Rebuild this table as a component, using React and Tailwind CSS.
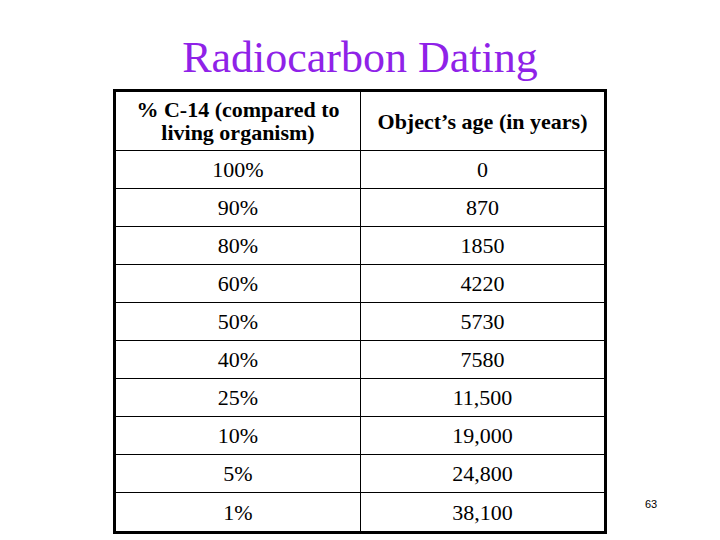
const rows = [
  ["100%", "0"],
  ["90%", "870"],
  ["80%", "1850"],
  ["60%", "4220"],
  ["50%", "5730"],
  ["40%", "7580"],
  ["25%", "11,500"],
  ["10%", "19,000"],
  ["5%", "24,800"],
  ["1%", "38,100"],
];

export default function App() {
  return (
    <div className="w-[720px] h-[540px] bg-white overflow-hidden pt-[36px] font-[family-name:'Liberation_Serif','Times_New_Roman',serif] text-black">
      <h1 className="text-center text-[44px] leading-[44px] text-[#8f22e8] mb-[9px]">
        Radiocarbon Dating
      </h1>
      <div className="flex">
        <div className="ml-[113px] w-[494px] border-[3px] border-black">
          <div className="flex h-[59px] border-b border-black font-bold text-[22px] leading-[23px]">
            <div className="w-[245px] border-r border-black flex items-center justify-center text-center">
              % C-14 (compared to
              <br />
              living organism)
            </div>
            <div className="flex-1 flex items-center justify-center">
              Object’s age (in years)
            </div>
          </div>
          {rows.map(([pct, age], i) => (
            <div
              key={pct}
              className={
                i === rows.length - 1
                  ? "flex h-[38px] text-[22px]"
                  : "flex h-[38px] text-[22px] border-b border-black"
              }
            >
              <div className="w-[245px] border-r border-black flex items-center justify-center">
                {pct}
              </div>
              <div className="flex-1 flex items-center justify-center">{age}</div>
            </div>
          ))}
        </div>
        <div className="self-end ml-[38px] mb-[22px] text-[11px] font-[family-name:'Liberation_Sans',Arial,sans-serif]">
          63
        </div>
      </div>
    </div>
  );
}
